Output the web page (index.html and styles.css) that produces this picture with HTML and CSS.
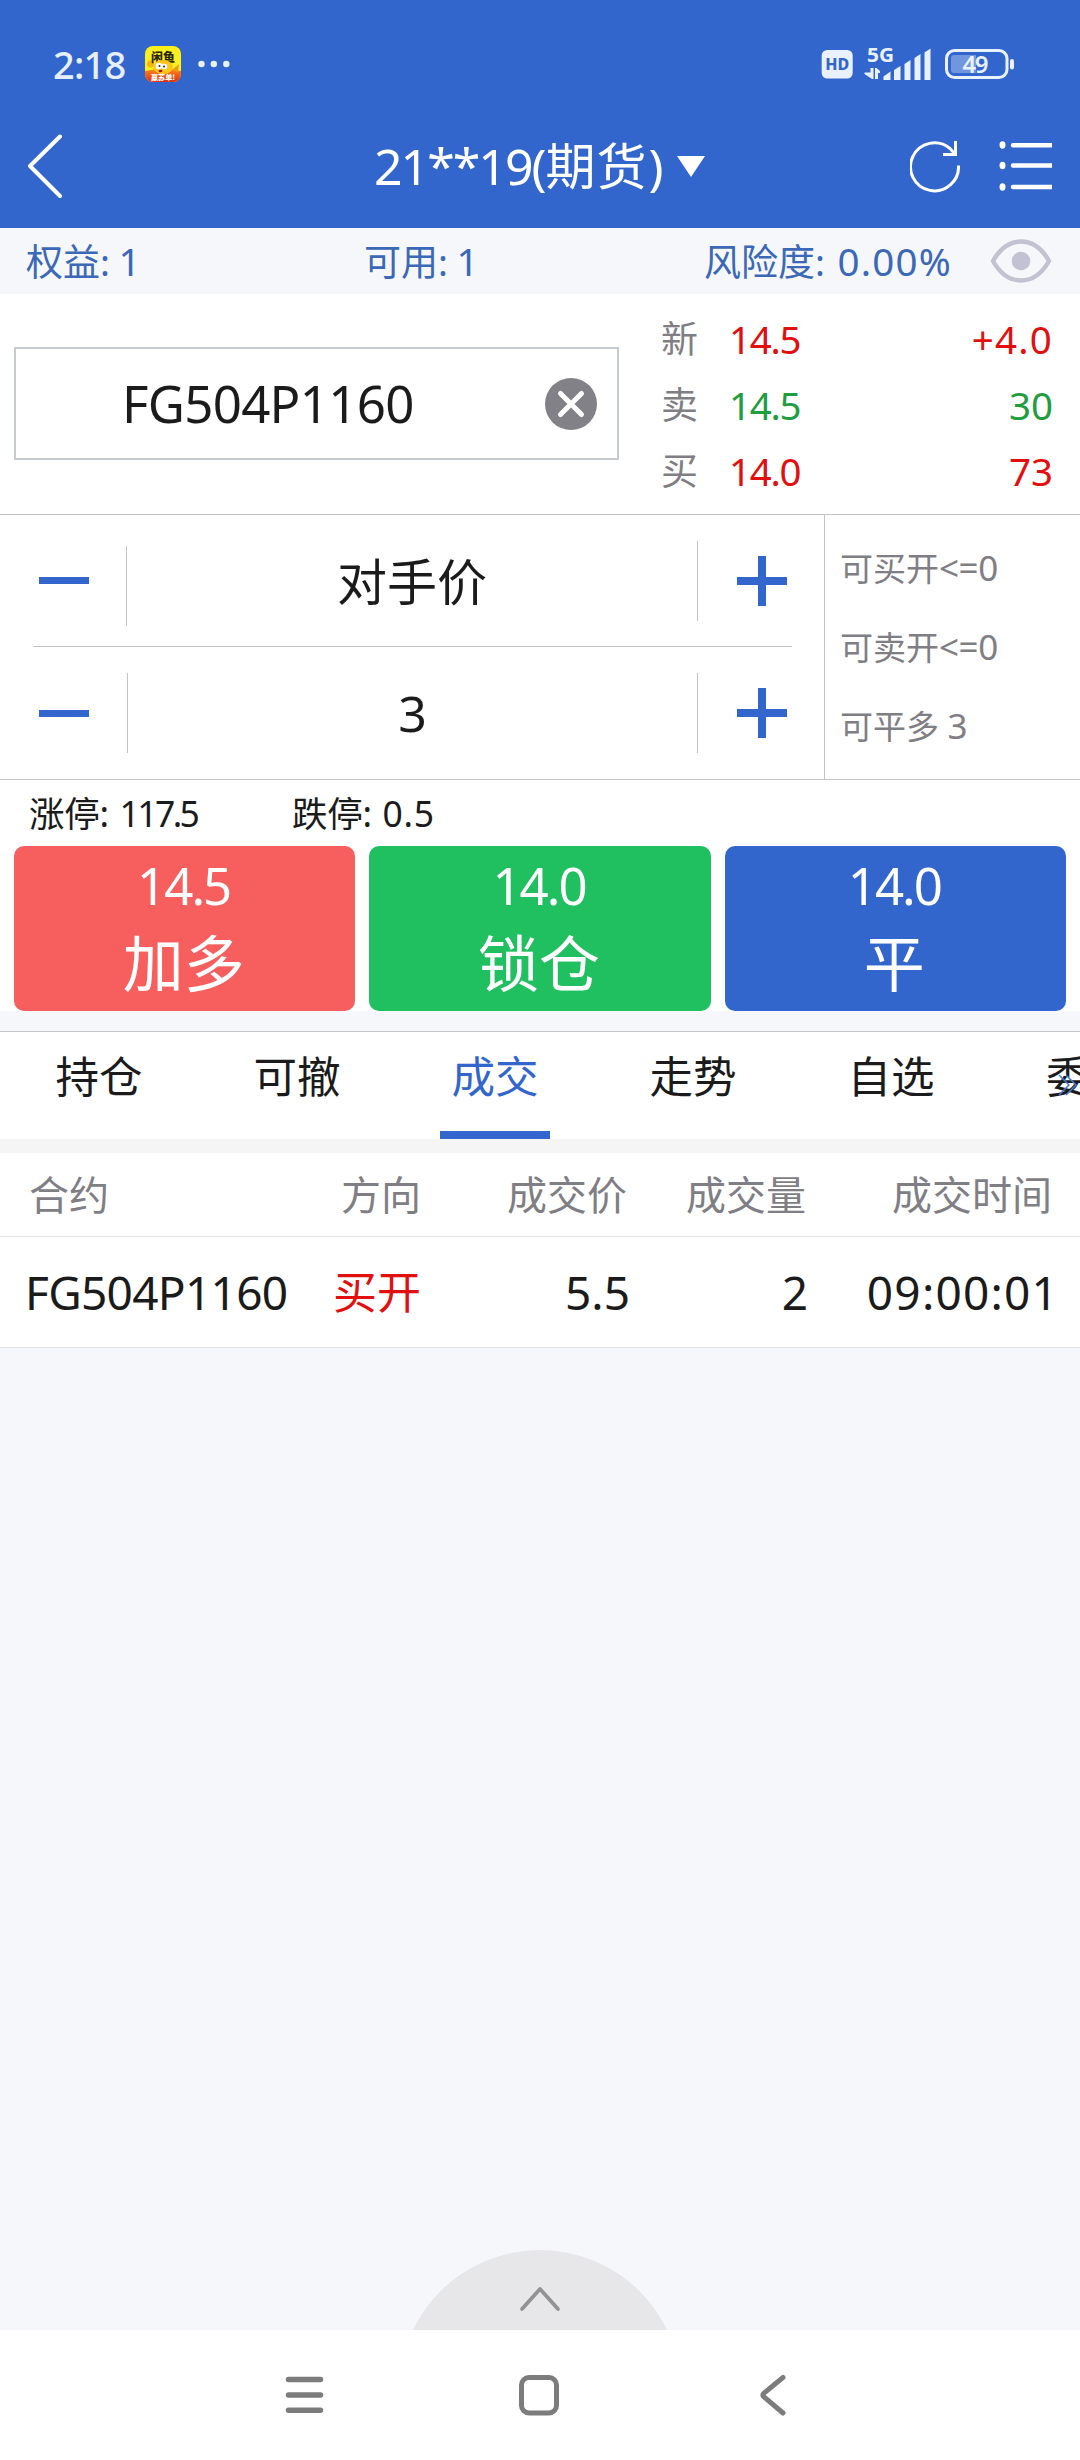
FILE: index.html
```html
<!DOCTYPE html>
<html lang="zh-CN">
<head>
<meta charset="utf-8">
<title>期货交易</title>
<link rel="stylesheet" href="styles.css">
</head>
<body>
<div class="app">
  <header class="top">
    <div class="status">
      <span class="clock">2:18</span>
      <svg class="app-badge" width="36" height="36" viewBox="0 0 36 36">
        <defs>
          <clipPath id="badge"><rect width="36" height="36" rx="8"/></clipPath>
          <linearGradient id="warm" x1="0" y1="0" x2="0" y2="1"><stop offset="0" stop-color="#ff8a1c"/><stop offset="1" stop-color="#e02c12"/></linearGradient>
        </defs>
        <g clip-path="url(#badge)">
          <rect width="36" height="36" fill="#fbf01c"/>
          <path d="M0 25q18-4 36 0v11H0z" fill="url(#warm)"/>
          <circle cx="5.500" cy="18" r="3.500" fill="#f3b60e"/>
          <path d="M27 24l7-6-1 8z" fill="#f09a1a"/>
          <text x="6" y="15.500" class="badge-name" textLength="24">闲鱼</text>
          <ellipse cx="18" cy="21" rx="10" ry="7" fill="#ffc61a"/>
          <circle cx="14" cy="20" r="3.300" fill="#fff"/><circle cx="19.500" cy="20.500" r="2.800" fill="#fff"/>
          <circle cx="14.500" cy="20" r="1" fill="#3a1c08"/><circle cx="19" cy="20.500" r="1" fill="#3a1c08"/>
          <ellipse cx="15.500" cy="25" rx="2" ry="1.300" fill="#a3170c"/>
          <text x="6" y="34" class="badge-slogan" textLength="24">赢苏单!</text>
        </g>
      </svg>
      <svg class="dots" width="32" height="8" viewBox="0 0 32 8" fill="#e9f1ff"><circle cx="3.500" cy="4" r="3.200"/><circle cx="15.800" cy="4" r="3.200"/><circle cx="28.300" cy="4" r="3.200"/></svg>
      <svg class="signals" width="196" height="40" viewBox="820 44 196 40" fill="#e9f1ff">
        <rect x="821.700" y="50" width="31" height="28.500" rx="5.500"/>
        <text x="825.300" y="70" class="hd" textLength="24">HD</text>
        <text x="867" y="62.300" class="gen" textLength="27" lengthAdjust="spacingAndGlyphs">5G</text>
        <path d="M870.500 68h3v11h-1.500l-7.500-5v-1.500h6zM875 79v-11h1.500l3.500 3v2h-2v6z"/>
        <path d="M883.500 80v-3.500l7-5V80zM894 80V70l6.500-4v14zM904.500 80V64l6-4v20zM914.500 80V58l6-4v26zM924.500 80V52.500l6-4V80z"/>
        <rect x="946.500" y="50.500" width="60.500" height="27" rx="8" fill="none" stroke="#e9f1ff" stroke-width="3"/>
        <path d="M954 55h22v18h-22q-3 0-3-3v-12q0-3 3-3z" fill="#7196dd"/>
        <rect x="1010" y="59" width="4" height="10.500" rx="2"/>
        <text x="962.500" y="72.500" class="charge" textLength="26">49</text>
      </svg>
    </div>
    <div class="titlebar">
      <svg class="back" width="36" height="66" viewBox="0 0 36 66" fill="none" stroke="#fff" stroke-width="4" stroke-linecap="round" stroke-linejoin="round"><path d="M34 3.500L4 33l30 30"/></svg>
      <div class="account"><span class="acct-no">21**19(</span><span class="acct-kind">期货</span><span>)</span>
        <svg width="28" height="21" viewBox="0 0 28 21" fill="#fff"><path d="M0 0h28L14 21z"/></svg>
      </div>
      <svg class="refresh" width="52" height="54" viewBox="0 0 52 54" fill="none" stroke="#fff" stroke-width="3"><path d="M48.500 26.500A24 24 0 1 1 40 9.500L45 15"/><path d="M45.500 2v13.500H33"/></svg>
      <svg class="menu" width="54" height="54" viewBox="0 0 54 54" fill="#fff"><ellipse cx="3.500" cy="6" rx="3" ry="3.700"/><ellipse cx="3.500" cy="26.500" rx="3" ry="3.700"/><ellipse cx="3.500" cy="48" rx="3" ry="3.700"/><path d="M14 4h39v4.500H14a2.200 2.200 0 010-4.500zM14 24.300h39v4.500H14a2.200 2.200 0 010-4.500zM14 45.800h39v4.500H14a2.200 2.200 0 010-4.500z"/></svg>
    </div>
  </header>

  <section class="funds">
    <div class="fund fund-equity">权益: <span class="fig">1</span></div>
    <div class="fund fund-free">可用: <span class="fig">1</span></div>
    <div class="fund fund-risk">风险度: <span class="fig ratio">0.00%</span></div>
    <svg class="eye" width="62" height="46" viewBox="0 0 62 46"><path d="M3 23Q14 3.500 31 3.500T59 23Q48 42.500 31 42.500T3 23z" fill="none" stroke="#c3c2d2" stroke-width="4.500" stroke-linejoin="round"/><circle cx="31" cy="23" r="9.300" fill="#c3c2d2"/></svg>
  </section>

  <section class="quote">
    <div class="contract">
      <span class="code">FG504P1160</span>
      <svg class="clear" width="52" height="52" viewBox="0 0 52 52"><circle cx="26" cy="26" r="26" fill="#828187"/><path d="M15.500 15.500l21 21M36.500 15.500l-21 21" stroke="#fff" stroke-width="5" stroke-linecap="round"/></svg>
    </div>
    <div class="book">
      <div class="book-row up"><span class="side">新</span><span class="px">14.5</span><span class="vol change">+4.0</span></div>
      <div class="book-row down"><span class="side">卖</span><span class="px">14.5</span><span class="vol">30</span></div>
      <div class="book-row up"><span class="side">买</span><span class="px">14.0</span><span class="vol">73</span></div>
    </div>
  </section>

  <section class="order">
    <div class="steppers">
      <div class="stepper stepper-price">
        <div class="step minus"><i class="bar"></i></div><i class="sep sep-left"></i>
        <span class="value">对手价</span>
        <i class="sep sep-right"></i><div class="step plus"><svg width="50" height="50" viewBox="0 0 50 50" fill="#3266cc"><path d="M21 0h8v21h21v8H29v21h-8V29H0v-8h21z"/></svg></div>
      </div>
      <div class="rule"></div>
      <div class="stepper stepper-qty">
        <div class="step minus"><i class="bar"></i></div><i class="sep sep-left"></i>
        <span class="value">3</span>
        <i class="sep"></i><div class="step plus"><svg width="50" height="50" viewBox="0 0 50 50" fill="#3266cc"><path d="M21 0h8v21h21v8H29v21h-8V29H0v-8h21z"/></svg></div>
      </div>
    </div>
    <div class="limits"><div>可买开<span class="cmp">&lt;=0</span></div><div>可卖开<span class="cmp">&lt;=0</span></div><div>可平多 <span class="cmp">3</span></div></div>
  </section>

  <section class="trade">
    <div class="bands"><span class="band-up">涨停: <span class="ceil">117.5</span></span><span>跌停: <span class="floor">0.5</span></span></div>
    <div class="actions">
      <div class="action buy"><span class="a-price">14.5</span><span class="a-name">加多</span></div>
      <div class="action lock"><span class="a-price">14.0</span><span class="a-name">锁仓</span></div>
      <div class="action close"><span class="a-price">14.0</span><span class="a-name">平</span></div>
    </div>
  </section>

  <nav class="tabs">
    <div class="tab">持仓</div><div class="tab">可撤</div><div class="tab active">成交</div><div class="tab">走势</div><div class="tab">自选</div><div class="tab">委</div>
    <svg class="more" width="20" height="22" viewBox="0 0 20 22" fill="none" stroke="#4a78cf" stroke-width="1.500"><path d="M1 1l10 10L1 21M8 1l10 10L8 21"/></svg>
  </nav>

  <section class="fills">
    <div class="row head"><span>合约</span><span>方向</span><span>成交价</span><span>成交量</span><span>成交时间</span></div>
    <div class="row item"><span class="f-code">FG504P1160</span><span class="f-side">买开</span><span>5.5</span><span>2</span><span class="f-time">09:00:01</span></div>
  </section>

  <div class="drawer">
    <svg width="284" height="80" viewBox="0 0 284 80"><circle cx="142" cy="141" r="141" fill="#e7e7e9"/><path d="M124 59l18-20 18 20" fill="none" stroke="#929292" stroke-width="3.700" stroke-linecap="round" stroke-linejoin="round"/></svg>
  </div>

  <footer class="sysnav">
    <svg width="40" height="42" viewBox="0 0 40 42" stroke="#7c7c7c" stroke-width="5.500" stroke-linecap="round"><path d="M3.500 5.500h32M3.500 21h32M3.500 36.300h32"/></svg>
    <svg width="42" height="42" viewBox="0 0 42 42" fill="none" stroke="#7c7c7c" stroke-width="5"><rect x="3.500" y="3.500" width="35" height="35.500" rx="7.500"/></svg>
    <svg width="30" height="42" viewBox="0 0 30 42" fill="none" stroke="#7c7c7c" stroke-width="5" stroke-linecap="round"><path d="M25 3.500L6 19q-2 2 0 4l19 16"/></svg>
  </footer>
</div>
</body>
</html>
```
FILE: styles.css
```css
* { box-sizing: border-box; }
body {
  margin: 0;
  font-family: "Noto Sans", "Noto Sans CJK SC", sans-serif;
  color: #1b1b1b;
  background: #f6f7fa;
}
svg { display: block; flex: none; }
.app { width: 1080px; height: 2460px; display: flex; flex-direction: column; overflow: hidden; }

.top { height: 228px; background: #3266cc; color: #fff; display: flex; flex-direction: column; flex: none; }
.status { height: 104px; padding: 24px 64px 0 53px; display: flex; align-items: center; }
.clock { width: 92px; font-size: 38px; font-weight: 500; line-height: 44px; color: #e6efff; letter-spacing: -0.8px; }
.dots { margin-left: 17px; }
.signals { margin-left: auto; }
.badge-name { font: 900 12px "Noto Sans CJK SC", sans-serif; fill: #2a2608; }
.badge-slogan { font: 900 7px "Noto Sans CJK SC", sans-serif; fill: #fff; }
.hd { font: 800 16px "Noto Sans", sans-serif; fill: #3266cc; }
.gen { font: 700 20px "Noto Sans", sans-serif; }
.charge { font: 600 24px "Noto Sans", sans-serif; }

.titlebar { height: 124px; padding: 0 27px 0 26px; display: flex; align-items: center; }
.account { margin-left: 312px; width: 336px; display: flex; align-items: center; font-size: 50px; line-height: 60px; white-space: nowrap; }
.acct-no { letter-spacing: -2px; }
.acct-kind { margin: 0 1px 0 1px; letter-spacing: 1px; }
.account svg { margin-left: auto; margin-right: 5px; margin-top: 1px; }
.refresh { margin-left: 200px; }
.menu { margin-left: auto; }

.funds { height: 66px; flex: none; display: flex; align-items: center; padding: 0 28px 0 26px; color: #3c68b8; font-size: 37px; line-height: 44px; white-space: nowrap; }
.fund-equity { width: 338px; }
.fund-free { width: 340px; }
.fig { font-size: 38.500px; margin-left: -1px; }
.ratio { margin-left: 3px; letter-spacing: 1.200px; }
.eye { margin-left: auto; }

.quote { height: 221px; flex: none; display: flex; background: #fff; border-bottom: 1px solid #c2c5c8; }
.contract { width: 605px; height: 113px; margin: 53px 0 0 14px; padding: 0 20px 0 106px; border: 2px solid #c5cbce; display: flex; align-items: center; justify-content: space-between; }
.code { font-size: 51px; line-height: 60px; letter-spacing: -0.7px; padding-bottom: 2px; }
.book { flex: 1; margin: 12px 27px 0 42px; }
.book-row { height: 66px; display: flex; align-items: center; font-size: 38.500px; line-height: 44px; }
.side { width: 68px; font-size: 37px; color: #7f7e84; }
.px { letter-spacing: -1.300px; }
.vol { margin-left: auto; }
.change { letter-spacing: 1.200px; }
.up { color: #e1100f; }
.down { color: #1f9d3f; }

.order { height: 265px; flex: none; display: flex; background: #fff; border-bottom: 1px solid #c2c5c8; }
.steppers { width: 824px; }
.stepper { height: 131px; display: flex; align-items: center; }
.stepper-qty { height: 132px; }
.rule { height: 1px; margin: 0 32px 0 33px; background: #c2c5c8; }
.minus { width: 126px; padding-left: 39px; }
.bar { display: block; width: 50px; height: 7px; background: #3266cc; }
.sep { width: 1px; height: 80px; background: #c2c5c8; }
.stepper-price .sep-left { margin-top: 10px; }
.stepper-qty .sep-left { margin-left: 1px; }
.value { flex: 1; text-align: center; font-size: 50px; line-height: 60px; }
.stepper-price .value { padding-top: 2px; }
.plus { width: 126px; padding-left: 39px; }
.limits { flex: 1; border-left: 1px solid #c2c5c8; padding: 14px 0 0 15px; font-size: 33px; line-height: 78px; color: #7f7e84; white-space: nowrap; }
.cmp { font-size: 35px; letter-spacing: -0.400px; }

.trade { height: 231px; flex: none; background: #fff; }
.bands { height: 66px; display: flex; align-items: center; padding: 0 0 1px 29px; font-size: 35.500px; line-height: 44px; letter-spacing: -0.3px; }
.band-up { width: 263px; }
.ceil { letter-spacing: -2.600px; margin-left: 2px; }
.floor { letter-spacing: 0.7px; margin-left: 2px; }
.actions { display: grid; grid-template-columns: repeat(3, 1fr); gap: 14px; padding: 0 14px; }
.action { height: 165px; border-radius: 10px; color: #fff; display: flex; flex-direction: column; align-items: center; padding-top: 10px; }
.buy { background: #f75f5f; }
.lock { background: #20bf60; }
.close { background: #3266cc; }
.a-price { font-size: 51px; line-height: 58px; letter-spacing: -2px; margin-right: 2px; }
.a-name { font-size: 61px; line-height: 100px; margin-right: 2px; }

.tabs { position: relative; height: 108px; margin-top: 20px; flex: none; display: flex; background: #fff; border-top: 1px solid #c2c5c8; overflow: hidden; }
.tab { flex: none; width: 198px; height: 107px; display: flex; flex-direction: column; align-items: center; font-size: 43.500px; line-height: 88px; }
.tab:nth-child(6) { width: 34px; align-items: flex-start; margin-left: 56px; }
.active { color: #3266cc; }
.active::after { content: ""; width: 110px; height: 8px; margin-top: 11px; background: #3266cc; }
.more { position: absolute; right: 2px; top: 42px; }

.fills { flex: none; background: #fff; border-top: 14px solid #f5f5f5; }
.row { display: grid; grid-template-columns: 302px 94px 206px 179px 246px; align-items: center; padding-left: 25px; border-bottom: 1px solid #e3e3e5; text-align: right; white-space: nowrap; }
.row > :first-child { text-align: left; }
.head { height: 84px; font-size: 40px; color: #7f7e84; line-height: 56px; padding-top: 1px; }
.head > :first-child { padding-left: 4px; }
.item { height: 111px; font-size: 46px; line-height: 60px; }
.item > :nth-child(3) { margin-right: -3px; }
.item > :nth-child(4) { margin-right: -2px; }
.f-code { letter-spacing: -0.7px; }
.f-side { font-size: 44px; color: #e1100f; }
.f-time { letter-spacing: 1.200px; margin-right: -7px; }

.drawer { margin-top: auto; display: flex; justify-content: center; }
.sysnav { height: 130px; flex: none; background: #fff; display: flex; align-items: center; padding-left: 285px; }
.sysnav svg:nth-child(2) { margin-left: 193px; }
.sysnav svg:nth-child(3) { margin-left: 198px; }
```
